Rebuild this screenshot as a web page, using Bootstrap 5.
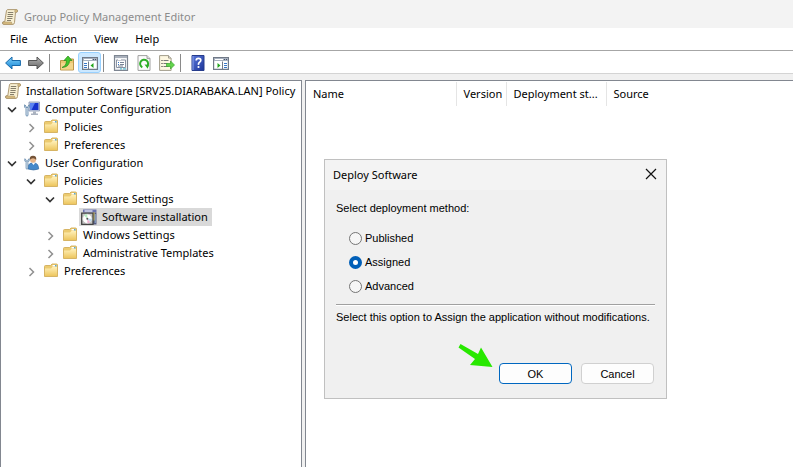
<!DOCTYPE html>
<html lang="en">
<head>
<meta charset="utf-8">
<meta name="viewport" content="width=device-width, initial-scale=1">
<title>Group Policy Management Editor</title>
<link href="https://cdn.jsdelivr.net/npm/bootstrap@5.3.0/dist/css/bootstrap.min.css" rel="stylesheet">
<style>
body{font-family:"Noto Sans","Open Sans",sans-serif;font-size:11px;line-height:18px;color:#000;background:#f0f0f0}
svg{display:block;flex:none}
.ico{width:16px;height:16px}
.titlebar{height:28px;padding:5px 2px 0;background:#f3f3f3;color:#8b8b8b}
.titlebar .ico{margin-right:6px}
.menubar{height:23px;padding:0 10px;gap:17px;background:#fff;border-bottom:1px solid #a6a6a6}
.menubar a{color:#000;text-decoration:none}
.toolbar{height:23px;padding:1px 1px 0;background:#fff;border-bottom:1px solid #d4d4d4}
.tool{width:23px;height:21px;padding:0;border:1px solid transparent;border-radius:3px;background:none}
.tool.on{background:#cce8ff;border-color:#99d1ff}
.sep{width:1px;height:18px;margin:0 5px 0 2px;background:#8a8a8a}
.panes{gap:3px;padding-top:6px}
.pane{background:#fff;border:1px solid #828790;border-bottom:0}
.tree-pane{flex:0 0 302px;padding-top:1px}
.tree ul{padding-left:19px}
.tree ul.top{padding-left:0}
.node{height:18px}
.twist{width:19px;height:18px;padding:0;margin:0 2px;border:0;background:none}
.node .ico{margin-right:5px}
.root-node{padding-left:4px}
.leaf{margin-left:21px;padding:0 4px 0 2px;background:#d9d9d9}
.leaf a,.node a{color:#000;text-decoration:none}
.cols{table-layout:fixed;margin-top:1px}
.cols th{height:24px;padding:0 5px 0 7px;font-weight:400;white-space:nowrap;border-right:1px solid #e5e5e5}
.cols th:last-child{border-right:0}
.c-name{width:150px}.c-ver{width:50px}.c-dep{width:100px}
.dlg{left:18px;top:78px;width:343px;background:#f0f0f0;border:1px solid #c0c0c0;font-family:"Liberation Sans",Arial,sans-serif}
.dlg-head{height:30px;padding:0 8px;background:#f3f3f3;font-family:"Noto Sans","Open Sans",sans-serif}
.dlg-head button{width:14px;height:18px;padding:0;border:0;background:none}
.dlg-body{padding:9px 11px 14px}
.opts{padding:9px 13px 6px}
.opt{height:24px;gap:3px}
.opt input{appearance:none;width:13px;height:13px;margin:0;border:1px solid #757575;border-radius:50%;background:#f6f6f6}
.opt input:checked{border:4px solid #005fb8;background:#fff}
.rule{height:2px;background:#a0a0a0;border-bottom:1px solid #fff;margin-bottom:2px}
.acts{gap:9px;margin-top:37px;padding-right:1px}
.acts button{width:73px;height:21px;padding:0;font-size:11px;line-height:18px;border:1px solid #d0d0d0;border-radius:4px;background:#fdfdfd;color:#000}
.acts .go{border-color:#0067c0}
.pointer{left:132px;top:183px}
</style>
<script src="https://cdn.jsdelivr.net/npm/bootstrap@5.3.0/dist/js/bootstrap.bundle.min.js" defer></script>
</head>
<body class="d-flex flex-column min-vh-100 m-0">
<svg width="0" height="0" class="position-absolute" aria-hidden="true">
 <defs>
  <linearGradient id="gf" x2="0" y2="1"><stop stop-color="#fff0b8"/><stop offset="1" stop-color="#edc65f"/></linearGradient>
  <linearGradient id="gb" x2="0" y2="1"><stop stop-color="#7fd0fa"/><stop offset="1" stop-color="#1484d4"/></linearGradient>
  <linearGradient id="gg" x2="0" y2="1"><stop stop-color="#b5b5b5"/><stop offset="1" stop-color="#666"/></linearGradient>
  <linearGradient id="gh" x2="1" y2="1"><stop stop-color="#5a78dc"/><stop offset="1" stop-color="#1c3498"/></linearGradient>
 </defs>
 <symbol id="scroll" viewBox="0 0 16 16">
  <path d="M4.500 1.500Q5 .6 6 .6h8.200q1.300 0 1.300 1.400 0 1.300-1.300 1.300h-.7L12.500 13.500Q12.300 15.400 10.800 15.400H1.800Q.5 15.400.5 14t1.300-1.400h1z" fill="#f8efd2" stroke="#a58e66" stroke-width=".9"/>
  <path d="M12.800 3.300V1.500q.5-.9 1.400-.9 1.300 0 1.300 1.400 0 1.300-1.300 1.300zM1 13h8.500q-.2 1.500 1.200 2.300H1.800Q.5 15 1 13z" fill="#d9bd80" stroke="#a58e66" stroke-width=".5"/>
  <path d="M5.800 3.500h5.500M5.600 5.500h5.500M5.400 7.500h5.300M5.200 9.500h5.200M5 11.500h4" stroke="#77715f" stroke-width=".9"/>
 </symbol>
 <symbol id="folder" viewBox="0 0 16 16">
  <path d="M1.500 13.500V3.500q0-1 1-1h5l1.500-1.500h4.500q1 0 1 1v11.500z" fill="#eccb70" stroke="#d3ae5a" stroke-width=".9"/>
  <path d="M9.500 2h4v1.500h-4z" fill="#fff"/><path d="M12 2h1.500v1.500H12z" fill="#57a9cf"/>
  <path d="M2 5.500h6l1.500-1.500H14v9H2z" fill="url(#gf)"/>
 </symbol>
 <symbol id="down" viewBox="0 0 18 18"><path d="M5 7.500l4 4 4-4" fill="none" stroke="#333" stroke-width="1.700"/></symbol>
 <symbol id="right" viewBox="0 0 18 18"><path d="M7.500 6l4 4-4 4" fill="none" stroke="#909090" stroke-width="1.500"/></symbol>
 <symbol id="wrench" viewBox="0 0 6 13"><path d="M.6.800v2.400L2 4.600V11.500q1 1.300 2 0V4.600l1.400-1.400V.8L4 2v1.500H2V2z" fill="#e5edf5" stroke="#577fa5" stroke-width=".8"/></symbol>
 <symbol id="computer" viewBox="0 0 16 16">
  <path d="M5 1h10.500v9H5z" fill="#c9d2e8" stroke="#8491ad" stroke-width=".8"/>
  <path d="M6 2h8.500v7H6z" fill="#1632cc"/><path d="M6 2h5L7.500 9H6z" fill="#5b83f2"/>
  <path d="M9 10.500h3v2h2v1.500H7v-1.500h2z" fill="#aab2bf"/>
  <use href="#wrench" x="0" y="3" width="6" height="13"/>
 </symbol>
 <symbol id="user" viewBox="0 0 16 16">
  <path d="M4 14q-.2-5.500 3.500-6h3.500q3.500.7 3.700 6-5 2-10.700 0z" fill="#4488ca" stroke="#2e6298" stroke-width=".6"/>
  <path d="M7.500 7.500L9.500 10l2-2.500z" fill="#fff"/>
  <circle cx="9" cy="4.700" r="3" fill="#e6b58b"/><path d="M5.800 5Q5.200.800 9 .800T12.200 5Q11 3.200 9 3.200T5.800 5z" fill="#745338"/>
  <use href="#wrench" x="0" y="3" width="6" height="12"/>
 </symbol>
 <symbol id="software" viewBox="0 0 16 16">
  <path d="M2 .5h13.500v3H2z" fill="#6a72ae"/><path d="M3.500 1.300h8v1.400h-8z" fill="#e2e6f5"/>
  <path d="M12 3.500h3.500v12H12z" fill="#565b80"/><path d="M12 3.500h1.500v8H12z" fill="#e7cb52"/><path d="M14.200 5v9" stroke="#93b1cf"/>
  <path d="M.7 4.200h11.300v11.100H.7z" fill="#c4c4c4" stroke="#444" stroke-width="1.300"/>
  <circle cx="6.300" cy="9.800" r="4.700" fill="#fff" stroke="#b5b5b5" stroke-width=".5"/>
  <path d="M6.300 9.800L3 6.500q1.300-1.200 3.300-1.400z" fill="#b8eec3"/><path d="M6.300 9.800l3 3.300q-1.300 1.200-3 1.200z" fill="#efb4d2"/><path d="M6.300 9.800h4.500q0 1.700-1.300 3z" fill="#b6d9ef"/>
  <circle cx="6.300" cy="9.800" r="1" fill="#555"/>
 </symbol>
 <symbol id="window" viewBox="0 0 16 16">
  <path d="M.6 2.500h14.800v11.900H.6z" fill="#fff" stroke="#707987" stroke-width="1.200"/>
  <path d="M1 3h14v3H1z" fill="#a8b1bf"/><path d="M2 4.500h8" stroke="#fff"/><path d="M11 4.500h1m1 0h1" stroke="#46536a"/>
 </symbol>
</svg>

<header>
 <div class="titlebar d-flex align-items-center"><svg class="ico"><use href="#scroll"/></svg><span>Group Policy Management Editor</span></div>
 <nav class="menubar d-flex align-items-center" aria-label="Main menu"><a href="#">File</a><a href="#">Action</a><a href="#">View</a><a href="#">Help</a></nav>
 <div class="toolbar d-flex align-items-center" role="toolbar" aria-label="Tools">
  <button class="tool d-flex align-items-center justify-content-center" aria-label="Back"><svg class="ico" viewBox="0 0 16 16"><path d="M.6 8L7 2v3.500h8.400v5H7V14z" fill="url(#gb)" stroke="#1769aa"/></svg></button>
  <button class="tool d-flex align-items-center justify-content-center" aria-label="Forward"><svg class="ico" viewBox="0 0 16 16"><path d="M15.400 8L9 2v3.500H.6v5H9V14z" fill="url(#gg)" stroke="#555"/></svg></button>
  <span class="sep"></span>
  <button class="tool d-flex align-items-center justify-content-center" aria-label="Up one level"><svg class="ico" viewBox="0 0 16 16"><path d="M1.500 15V5.500h5L8 4h6.500v11z" fill="#ecc873" stroke="#b58d3e" stroke-width=".9"/><path d="M2 8h12v6.500H2z" fill="#f3d68c"/><path d="M3 12.500Q7.500 11 7.500 5.500H5L9 1l4 4.500h-2.500Q10.500 12 3 12.500z" fill="#43c52c" stroke="#258c18" stroke-width=".7"/></svg></button>
  <button class="tool on d-flex align-items-center justify-content-center" aria-label="Show console tree" aria-pressed="true"><svg class="ico" viewBox="0 0 16 16"><use href="#window"/><path d="M6.500 6.500v8" stroke="#707987"/><path d="M2 8.500h3M2 10.500h3M2 12.500h3" stroke="#3978c8"/><path d="M11.500 8v5l-3-2.500z" fill="#23a51c"/></svg></button>
  <span class="sep"></span>
  <button class="tool d-flex align-items-center justify-content-center" aria-label="Properties"><svg class="ico" viewBox="0 0 16 16"><path d="M1.500.600h13v14.800h-13z" fill="#f5f6f8" stroke="#7d8591" stroke-width="1.200"/><path d="M2 1h12v2H2z" fill="#a9b0bb"/><path d="M3.500 5h9v7.500h-9z" fill="#fff" stroke="#8b94a3"/><path d="M5 4.500h3" stroke="#fff"/><path d="M5 7.500h1M5 9.500h1" stroke="#3978c8"/><path d="M7 7.500h4M7 9.500h4M5 11h5" stroke="#788496"/><path d="M7 13.900h2M10 13.900h3" stroke="#3db5cc"/></svg></button>
  <button class="tool d-flex align-items-center justify-content-center" aria-label="Refresh"><svg class="ico" viewBox="0 0 16 16"><path d="M2 .6h9l3 3v11.800H2z" fill="#fcfcfc" stroke="#a0a0a0"/><path d="M11 .6v3h3" fill="#ddd" stroke="#a0a0a0"/><path d="M6.300 12.300A4 4 0 1 1 11 11.500" fill="none" stroke="#2dae27" stroke-width="2"/><path d="M8.500 9.500l4.500.3-1.300 4z" fill="#2dae27"/></svg></button>
  <button class="tool d-flex align-items-center justify-content-center" aria-label="Export list"><svg class="ico" viewBox="0 0 16 16"><path d="M.6.6h9l2.500 2.500v12.300H.6z" fill="#fdf7e1" stroke="#a29c8b"/><path d="M9.500.6v2.500h2.500" fill="#ddd" stroke="#a29c8b"/><path d="M2.500 5.500h1M2.500 8.500h1M2.500 11.500h1" stroke="#222"/><path d="M4.500 5.500h5M4.500 8.500h4M4.500 11.500h5" stroke="#777"/><path d="M7.500 8.500h4V6l4 4-4 4v-2.500h-4z" fill="#62d44c" stroke="#3aa52d" stroke-width=".7"/></svg></button>
  <span class="sep"></span>
  <button class="tool d-flex align-items-center justify-content-center" aria-label="Help"><svg class="ico" viewBox="0 0 16 16"><path d="M2 .5h12v15H2z" fill="url(#gh)" stroke="#273c8c"/><path d="M3 1v14" stroke="#8ba2ec"/><path d="M6.200 5.500Q6.200 3.300 8.500 3.300T10.800 5.300Q10.800 6.500 9.500 7.300T8.500 9.800" fill="none" stroke="#fff" stroke-width="1.700"/><circle cx="8.500" cy="12" r="1.100" fill="#fff"/></svg></button>
  <button class="tool d-flex align-items-center justify-content-center" aria-label="Show action pane"><svg class="ico" viewBox="0 0 16 16"><use href="#window"/><path d="M9.500 6.500v8" stroke="#707987"/><path d="M11 8.500h3M11 10.500h3M11 12.500h3" stroke="#3978c8"/><path d="M4.500 8v5l3-2.500z" fill="#23a51c"/></svg></button>
 </div>
</header>

<main class="panes d-flex flex-grow-1">
 <nav class="pane tree-pane tree overflow-hidden text-nowrap" aria-label="Console tree">
  <div class="node root-node d-flex align-items-center"><svg class="ico"><use href="#scroll"/></svg><a href="#">Installation Software [SRV25.DIARABAKA.LAN] Policy</a></div>
  <ul class="top list-unstyled m-0">
   <li><div class="node d-flex align-items-center"><button class="twist" aria-label="Collapse"><svg width="18" height="18"><use href="#down"/></svg></button><svg class="ico"><use href="#computer"/></svg><a href="#">Computer Configuration</a></div>
    <ul class="list-unstyled">
     <li class="node d-flex align-items-center"><button class="twist" aria-label="Expand"><svg width="18" height="18"><use href="#right"/></svg></button><svg class="ico"><use href="#folder"/></svg><a href="#">Policies</a></li>
     <li class="node d-flex align-items-center"><button class="twist" aria-label="Expand"><svg width="18" height="18"><use href="#right"/></svg></button><svg class="ico"><use href="#folder"/></svg><a href="#">Preferences</a></li>
    </ul></li>
   <li><div class="node d-flex align-items-center"><button class="twist" aria-label="Collapse"><svg width="18" height="18"><use href="#down"/></svg></button><svg class="ico"><use href="#user"/></svg><a href="#">User Configuration</a></div>
    <ul class="list-unstyled">
     <li><div class="node d-flex align-items-center"><button class="twist" aria-label="Collapse"><svg width="18" height="18"><use href="#down"/></svg></button><svg class="ico"><use href="#folder"/></svg><a href="#">Policies</a></div>
      <ul class="list-unstyled">
       <li><div class="node d-flex align-items-center"><button class="twist" aria-label="Collapse"><svg width="18" height="18"><use href="#down"/></svg></button><svg class="ico"><use href="#folder"/></svg><a href="#">Software Settings</a></div>
        <ul class="list-unstyled">
         <li class="d-flex"><div class="node leaf d-flex align-items-center"><svg class="ico"><use href="#software"/></svg><a href="#" aria-current="true">Software installation</a></div></li>
        </ul></li>
       <li class="node d-flex align-items-center"><button class="twist" aria-label="Expand"><svg width="18" height="18"><use href="#right"/></svg></button><svg class="ico"><use href="#folder"/></svg><a href="#">Windows Settings</a></li>
       <li class="node d-flex align-items-center"><button class="twist" aria-label="Expand"><svg width="18" height="18"><use href="#right"/></svg></button><svg class="ico"><use href="#folder"/></svg><a href="#">Administrative Templates</a></li>
      </ul></li>
     <li class="node d-flex align-items-center"><button class="twist" aria-label="Expand"><svg width="18" height="18"><use href="#right"/></svg></button><svg class="ico"><use href="#folder"/></svg><a href="#">Preferences</a></li>
    </ul></li>
  </ul>
 </nav>

 <section class="pane flex-grow-1 position-relative border-end-0">
  <table class="cols w-100">
   <thead><tr><th class="c-name">Name</th><th class="c-ver">Version</th><th class="c-dep">Deployment st...</th><th>Source</th></tr></thead>
  </table>
  <div class="dlg position-absolute" role="dialog" aria-labelledby="dlgTitle">
   <div class="dlg-head d-flex align-items-center justify-content-between"><span id="dlgTitle">Deploy Software</span>
    <button aria-label="Close"><svg width="14" height="18" viewBox="0 0 14 18"><path d="M2 3l10 10M12 3L2 13" stroke="#111" stroke-width="1.200"/></svg></button></div>
   <form class="dlg-body">
    <div>Select deployment method:</div>
    <div class="opts">
     <div class="opt d-flex align-items-center"><input type="radio" name="method" id="m1"><label for="m1">Published</label></div>
     <div class="opt d-flex align-items-center"><input type="radio" name="method" id="m2" checked><label for="m2">Assigned</label></div>
     <div class="opt d-flex align-items-center"><input type="radio" name="method" id="m3"><label for="m3">Advanced</label></div>
    </div>
    <div class="rule"></div>
    <div class="text-nowrap">Select this option to Assign the application without modifications.</div>
    <div class="acts d-flex justify-content-end"><button type="button" class="go">OK</button><button type="button">Cancel</button></div>
   </form>
   <svg class="pointer position-absolute" width="36" height="26" viewBox="0 0 36 26" aria-hidden="true"><path d="M3.500 1L21 11l3-6.500L35.500 24 13 22l5-6L1.500 4.500z" fill="#28e800"/></svg>
  </div>
 </section>
</main>
</body>
</html>
